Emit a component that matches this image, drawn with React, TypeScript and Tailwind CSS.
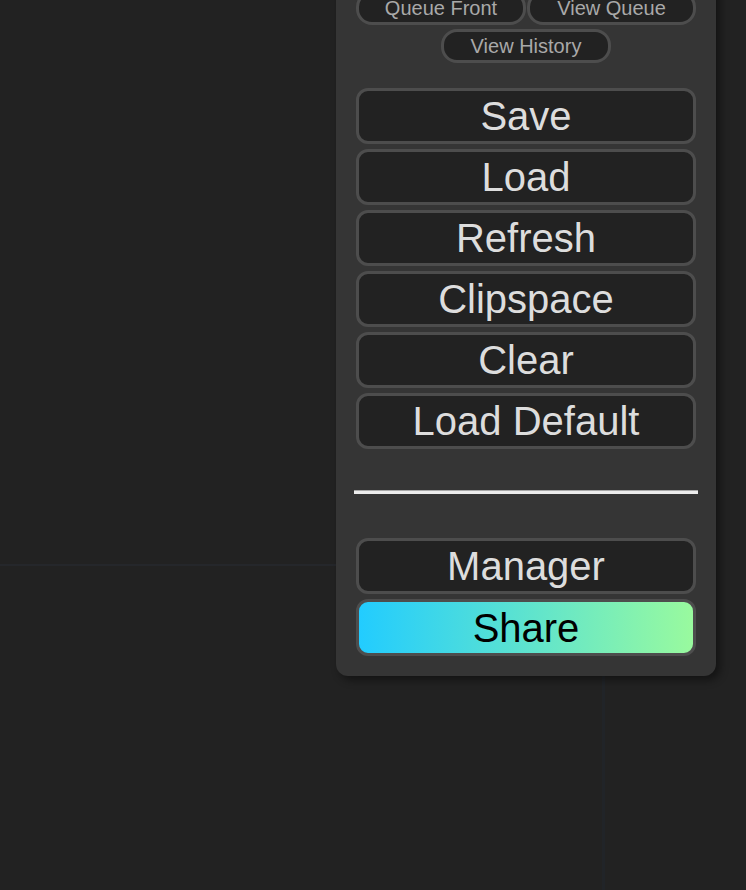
import React from "react";

const big =
  "h-[56px] w-full rounded-[12px] border-[3px] border-[#4d4d4d] bg-[#222222] text-[40px] leading-none text-[#dddddd] flex items-center justify-center";
const small =
  "h-[34px] rounded-[16px] border-[3px] border-[#4d4d4d] bg-[#222222] text-[20px] leading-none text-[#a9a9a9] flex items-center justify-center";

export default function App() {
  return (
    <div
      className="relative w-[746px] h-[890px] overflow-hidden bg-[#222222]"
      style={{ fontFamily: '"Liberation Sans", Arial, sans-serif' }}
    >
      {/* canvas grid lines */}
      <div className="absolute left-0 top-[564px] w-[336px] h-[2px] bg-[#25272b]" />
      <div className="absolute left-[602px] top-[670px] w-[3px] h-[220px] bg-[#212428]" />

      {/* floating menu panel */}
      <div className="absolute left-[336px] top-[-30px] w-[380px] rounded-[12px] bg-[#353535] px-[20px] pt-[21px] pb-[20px] shadow-[4px_4px_8px_rgba(0,0,0,0.45)] flex flex-col">
        <div className="flex gap-[1px]">
          <button className={small + " w-[170px]"}>Queue Front</button>
          <button className={small + " w-[169px]"}>View Queue</button>
        </div>
        <div className="mt-[4px] flex justify-center">
          <button className={small + " w-[170px]"}>View History</button>
        </div>

        <div className="mt-[25px] flex flex-col gap-[5px]">
          <button className={big}>Save</button>
          <button className={big}>Load</button>
          <button className={big}>Refresh</button>
          <button className={big}>Clipspace</button>
          <button className={big}>Clear</button>
          <button className={big}>Load Default</button>
        </div>

        <div className="mt-[41px] -mx-[2px] h-[4px] border-t border-[#a8a8a8] bg-[#ececec]" />

        <div className="mt-[44px] flex flex-col gap-[5px]">
          <button className={big}>Manager</button>
          <button className="h-[57px] w-full rounded-[12px] border-[3px] border-[#4d4d4d] bg-[linear-gradient(to_right,#22ccff,#99fa9e)] text-[40px] leading-none text-black flex items-center justify-center">
            Share
          </button>
        </div>
      </div>
    </div>
  );
}
